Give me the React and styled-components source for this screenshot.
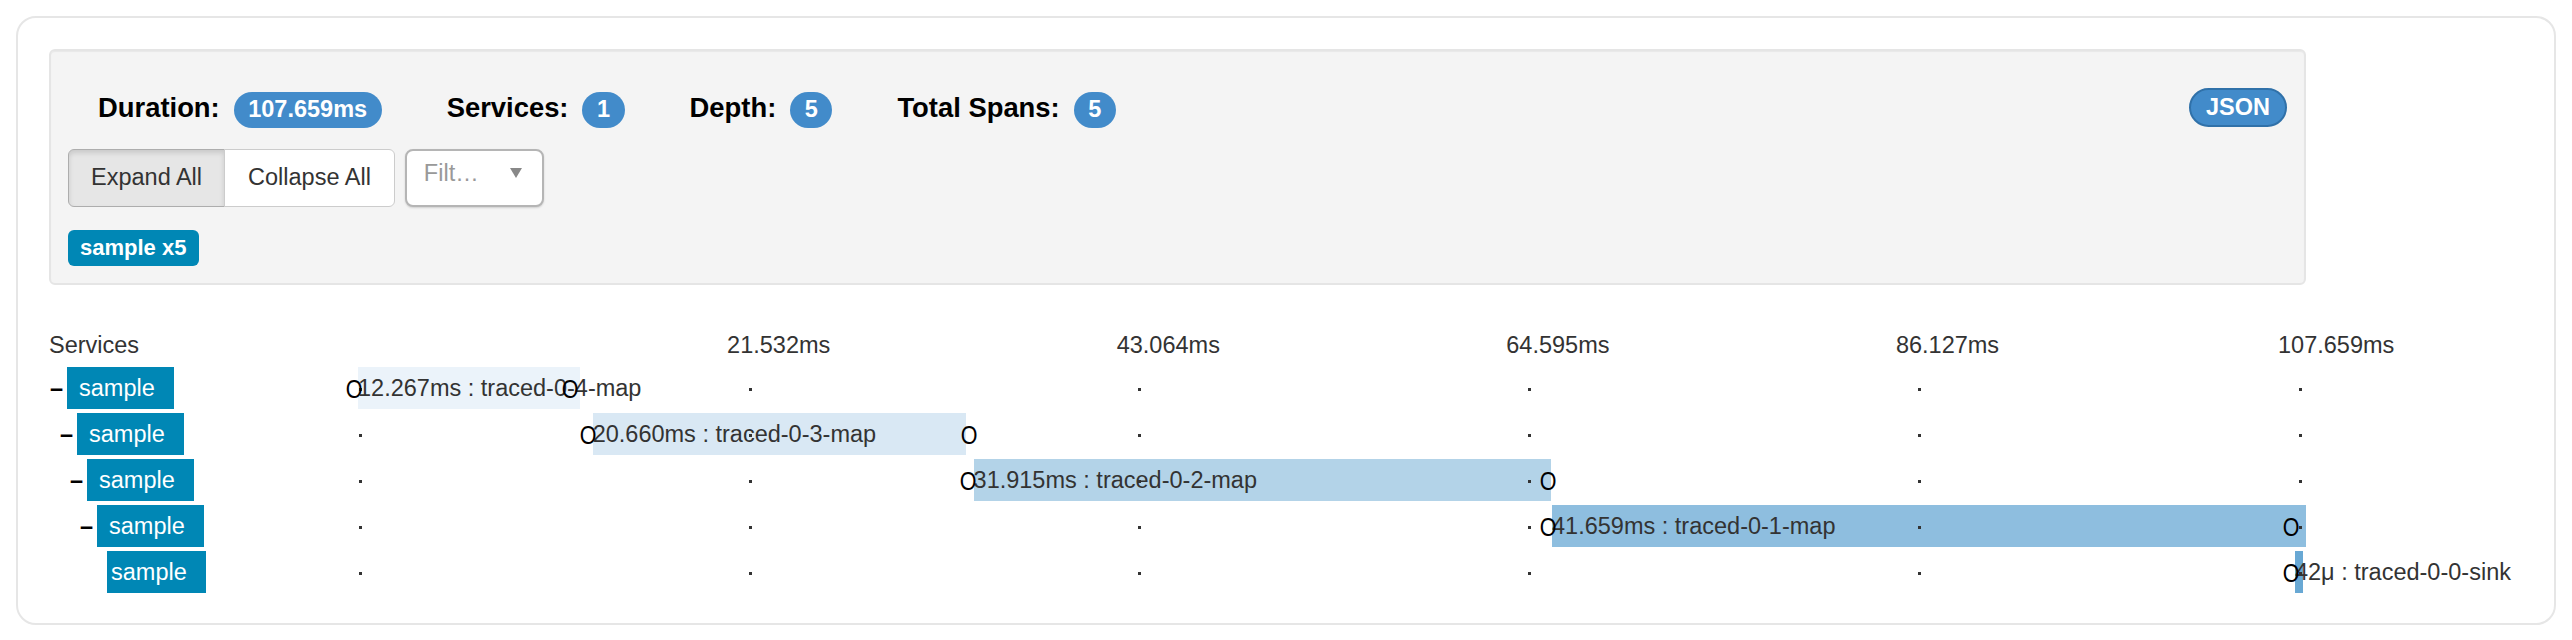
import React from "react";
import styled, { createGlobalStyle } from "styled-components";

const TOTAL = 107.659;

const spans = [
    { id: 1, level: 0, start: 0, dur: 12.267, color: "#ebf3fa", text: "12.267ms : traced-0-4-map", marks: [-0.249, 11.744] },
    { id: 2, level: 1, start: 12.97, dur: 20.66, color: "#d9e8f4", text: "20.660ms : traced-0-3-map", marks: [12.684, 33.768] },
    { id: 3, level: 2, start: 34.02, dur: 31.915, color: "#b3d3e8", text: "31.915ms : traced-0-2-map", marks: [33.74, 65.77] },
    { id: 4, level: 3, start: 65.99, dur: 41.659, color: "#8ebedf", text: "41.659ms : traced-0-1-map", marks: [65.77, 106.83] },
    { id: 5, level: 4, start: 107.05, dur: 0.042, color: "#68a8d4", text: "42μ : traced-0-0-sink", marks: [106.83], leaf: true },
];

const ticks = ["21.532ms", "43.064ms", "64.595ms", "86.127ms", "107.659ms"];

const pct = (ms) => `${(ms / TOTAL) * 100}%`;

export default function App() {
    return (
        <>
            <GlobalStyle />
            <Page>
                <Card>
                    <Content>
                        <Well>
                            <StatsRow>
                                <Stats>
                                    <Stat>
                                        <StatLabel>Duration:</StatLabel>
                                        <Badge>107.659ms</Badge>
                                    </Stat>
                                    <Stat>
                                        <StatLabel>Services:</StatLabel>
                                        <Badge>1</Badge>
                                    </Stat>
                                    <Stat>
                                        <StatLabel>Depth:</StatLabel>
                                        <Badge>5</Badge>
                                    </Stat>
                                    <Stat>
                                        <StatLabel>Total Spans:</StatLabel>
                                        <Badge>5</Badge>
                                    </Stat>
                                </Stats>
                                <JsonButton>JSON</JsonButton>
                            </StatsRow>
                            <Toolbar>
                                <BtnGroup>
                                    <ToolButton $active $first>Expand All</ToolButton>
                                    <ToolButton $last>Collapse All</ToolButton>
                                </BtnGroup>
                                <FilterSelect>
                                    <Placeholder>Filt…</Placeholder>
                                    <Caret />
                                </FilterSelect>
                            </Toolbar>
                            <ServiceTag>sample x5</ServiceTag>
                        </Well>

                        <Timeline>
                            <HeaderRow>
                                <ServiceHead>Services</ServiceHead>
                                <Track>
                                    {ticks.map((t, i) => (
                                        <TickLabel key={t} $index={i + 1}>{t}</TickLabel>
                                    ))}
                                </Track>
                            </HeaderRow>
                            <Rows>
                                {spans.map((s) => (
                                    <Row key={s.id}>
                                        <ServiceCell $level={s.level}>
                                            <Toggle>{s.leaf ? "" : "–"}</Toggle>
                                            <ServiceName $leaf={s.leaf}>sample</ServiceName>
                                        </ServiceCell>
                                        <Track>
                                            <Bar $color={s.color} style={{ left: pct(s.start), width: pct(s.dur) }}>
                                                <BarText>{s.text}</BarText>
                                            </Bar>
                                            {[0, 1, 2, 3, 4, 5].map((k) => (
                                                <Dot key={k} $index={k} />
                                            ))}
                                            {s.marks.map((m, i) => (
                                                <Mark key={i} style={{ left: pct(m) }}>O</Mark>
                                            ))}
                                        </Track>
                                    </Row>
                                ))}
                            </Rows>
                        </Timeline>
                    </Content>
                </Card>
            </Page>
        </>
    );
}

const GlobalStyle = createGlobalStyle`
    body {
        margin: 0;
        background: #ffffff;
        font-family: "Liberation Sans", Arial, Helvetica, sans-serif;
        color: #333333;
    }
`;

const Page = styled.div`
    padding: 16px;
`;

const Card = styled.div`
    border: 2px solid #e6e6e6;
    border-radius: 20px;
    padding: 31px 248px 30px 31px;
`;

const Content = styled.div`
    display: flex;
    flex-direction: column;
`;

const Well = styled.div`
    display: flex;
    flex-direction: column;
    background: #f4f4f4;
    border: 2px solid #e5e5e5;
    border-radius: 6px;
    box-shadow: inset 0 1px 1px rgba(0, 0, 0, 0.05);
    padding: 17px;
`;

const StatsRow = styled.div`
    display: flex;
    align-items: flex-start;
    justify-content: space-between;
    margin-top: 20px;
`;

const Stats = styled.div`
    display: flex;
    align-items: baseline;
    gap: 65px;
    padding-left: 30px;
    margin-top: 4px;
`;

const Stat = styled.div`
    display: flex;
    align-items: baseline;
    gap: 14px;
`;

const StatLabel = styled.span`
    font-size: 27.4px;
    font-weight: 700;
    color: #000000;
`;

const Badge = styled.span`
    background: #428bca;
    color: #ffffff;
    font-size: 23.5px;
    font-weight: 700;
    line-height: 1;
    padding: 6px 14.5px;
    border-radius: 18px;
`;

const JsonButton = styled.button`
    height: 39px;
    padding: 0 15px;
    background: #428bca;
    border: 2px solid #3071a9;
    border-radius: 20px;
    color: #ffffff;
    font-family: inherit;
    font-size: 23.5px;
    font-weight: 700;
`;

const Toolbar = styled.div`
    display: flex;
    gap: 10px;
    margin-top: 21px;
`;

const BtnGroup = styled.div`
    display: flex;
`;

const ToolButton = styled.button`
    height: 58px;
    padding: 0 ${(p) => (p.$last ? 23 : 22)}px;
    font-family: inherit;
    font-size: 23.5px;
    color: #333333;
    background: ${(p) => (p.$active ? "#e6e6e6" : "#ffffff")};
    border: 1px solid ${(p) => (p.$active ? "#adadad" : "#cccccc")};
    box-shadow: ${(p) => (p.$active ? "inset 0 3px 5px rgba(0, 0, 0, 0.125)" : "none")};
    border-radius: ${(p) => (p.$first ? "6px 0 0 6px" : p.$last ? "0 6px 6px 0" : "0")};
    margin-left: ${(p) => (p.$last ? "-1px" : "0")};
`;

const FilterSelect = styled.div`
    box-sizing: border-box;
    width: 139px;
    height: 58px;
    display: flex;
    align-items: center;
    justify-content: space-between;
    padding: 0 20px 9px 17px;
    background: #ffffff;
    border: 2px solid #b5b5b5;
    border-radius: 8px;
    box-shadow: 0 1px 2px rgba(0, 0, 0, 0.15);
`;

const Placeholder = styled.span`
    font-size: 23.5px;
    color: #999999;
`;

const Caret = styled.span`
    width: 0;
    height: 0;
    border-left: 6px solid transparent;
    border-right: 6px solid transparent;
    border-top: 10px solid #888888;
`;

const ServiceTag = styled.span`
    align-self: flex-start;
    margin-top: 23px;
    height: 36px;
    line-height: 36px;
    padding: 0 13px 0 12px;
    background: #0087b5;
    color: #ffffff;
    font-size: 22px;
    font-weight: 700;
    border-radius: 6px;
`;

const Timeline = styled.div`
    margin-top: 43px;
    font-size: 23.5px;
    color: #333333;
`;

const HeaderRow = styled.div`
    display: flex;
    height: 34px;
    line-height: 34px;
`;

const ServiceHead = styled.div`
    width: 309px;
    flex-shrink: 0;
`;

const Track = styled.div`
    position: relative;
    flex: 1;
`;

const TickLabel = styled.span`
    position: absolute;
    top: 0;
    white-space: nowrap;
    left: ${(p) => (p.$index === 5 ? "calc(100% - 28px)" : `calc(${p.$index * 20}% - 20.5px)`)};
`;

const Rows = styled.div`
    display: flex;
    flex-direction: column;
    gap: 4px;
    margin-top: 5px;
`;

const Row = styled.div`
    display: flex;
    height: 42px;
`;

const ServiceCell = styled.div`
    box-sizing: border-box;
    width: 309px;
    flex-shrink: 0;
    display: flex;
    padding-left: ${(p) => p.$level * 10}px;
`;

const Toggle = styled.span`
    width: 18px;
    margin-left: 1px;
    line-height: 42px;
    font-weight: 700;
    color: #000000;
`;

const ServiceName = styled.span`
    line-height: 42px;
    padding: 0 19px 0 ${(p) => (p.$leaf ? 4 : 12)}px;
    margin-left: -1px;
    background: #0087b5;
    color: #ffffff;
`;

const Bar = styled.div`
    position: absolute;
    top: 0;
    bottom: 0;
    min-width: 8px;
    background: ${(p) => p.$color};
`;

const BarText = styled.span`
    position: absolute;
    left: 0;
    top: 0;
    line-height: 42px;
    white-space: nowrap;
    color: #333333;
`;

const Dot = styled.span`
    position: absolute;
    z-index: 2;
    top: 21px;
    width: 3px;
    height: 3px;
    background: #333333;
    left: ${(p) => (p.$index === 5 ? "calc(100% - 7.5px)" : `calc(${p.$index * 20}% + 1.2px)`)};
`;

const Mark = styled.span`
    position: absolute;
    z-index: 3;
    top: 0;
    transform: translateX(-50%) scaleX(0.86);
    line-height: 44px;
    font-size: 25px;
    color: #000000;
`;
